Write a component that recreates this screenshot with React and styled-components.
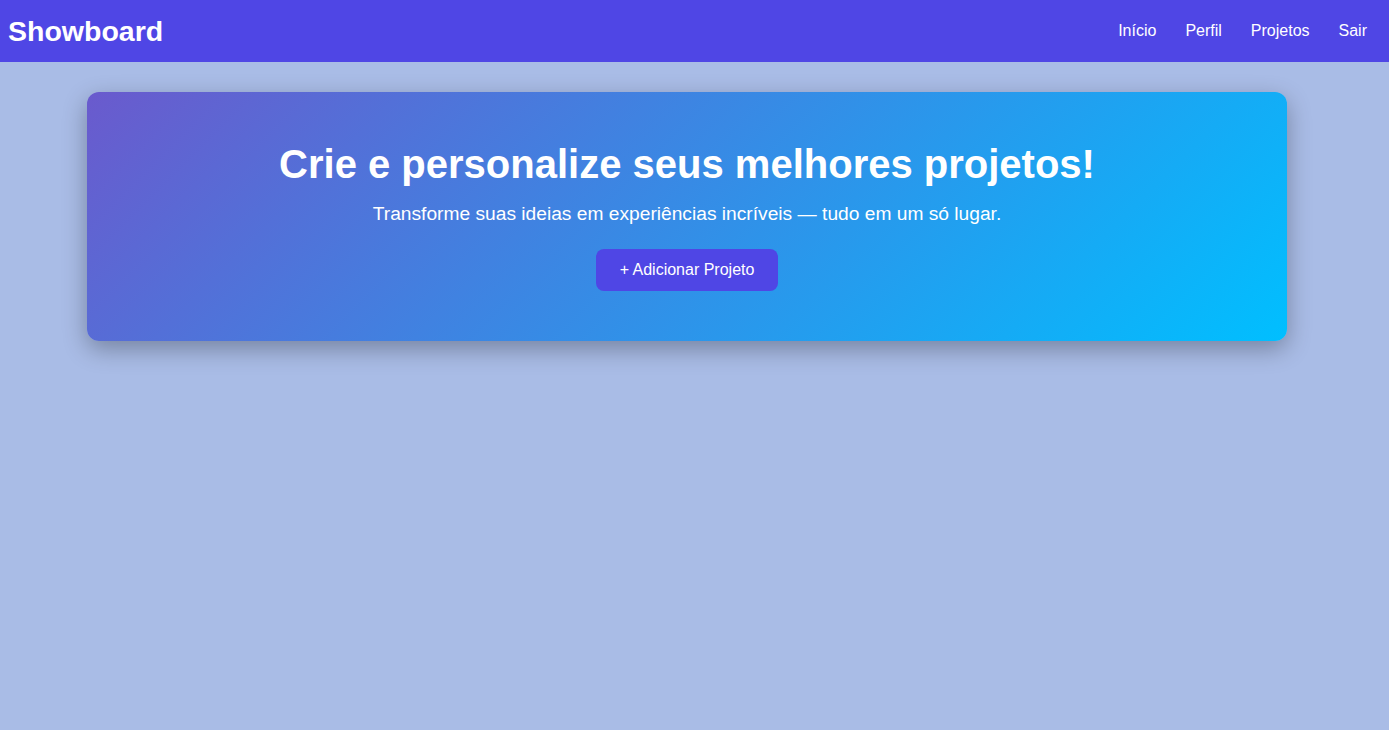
import React from 'react';
import styled, { createGlobalStyle } from 'styled-components';

const GlobalStyle = createGlobalStyle`
  html, body {
    margin: 0;
    padding: 0;
    background: #a9bce6;
    font-family: "Liberation Sans", Arial, sans-serif;
    min-height: 100%;
  }
`;

const Header = styled.header`
  height: 62px;
  background: #4f46e5;
  display: flex;
  align-items: center;
  justify-content: space-between;
  padding: 0 22px 0 8px;
  color: #fff;
`;

const Logo = styled.h1`
  margin: 0;
  font-size: 28.5px;
  font-weight: 700;
`;

const Nav = styled.nav`
  display: flex;
  gap: 29px;
`;

const NavLink = styled.a`
  color: #fff;
  text-decoration: none;
  font-size: 16px;
  cursor: pointer;
`;

const Main = styled.main`
  box-sizing: border-box;
  min-height: calc(100vh - 62px);
  padding: 30px 15px 40px 0;
`;

const Hero = styled.section`
  width: 1200px;
  margin: 0 auto;
  box-sizing: border-box;
  padding: 50px 20px 50px;
  border-radius: 12px;
  background: linear-gradient(135deg, #6a5acd, #00bfff);
  box-shadow: 0 8px 24px rgba(0, 0, 0, 0.3);
  color: #fff;
  display: flex;
  flex-direction: column;
  align-items: center;
  text-align: center;
`;

const Title = styled.h2`
  margin: 0;
  font-size: 40px;
  font-weight: 700;
`;

const Subtitle = styled.p`
  margin: 16px 0 0;
  font-size: 19.2px;
`;

const AddButton = styled.button`
  margin-top: 24px;
  padding: 12px 24px;
  border: none;
  border-radius: 8px;
  background: #4f46e5;
  color: #fff;
  font-family: inherit;
  font-size: 16px;
  cursor: pointer;
`;

export default function App() {
  return (
    <>
      <GlobalStyle />
      <Header>
        <Logo>Showboard</Logo>
        <Nav>
          <NavLink>Início</NavLink>
          <NavLink>Perfil</NavLink>
          <NavLink>Projetos</NavLink>
          <NavLink>Sair</NavLink>
        </Nav>
      </Header>
      <Main>
        <Hero>
          <Title>Crie e personalize seus melhores projetos!</Title>
          <Subtitle>Transforme suas ideias em experiências incríveis — tudo em um só lugar.</Subtitle>
          <AddButton>+ Adicionar Projeto</AddButton>
        </Hero>
      </Main>
    </>
  );
}
